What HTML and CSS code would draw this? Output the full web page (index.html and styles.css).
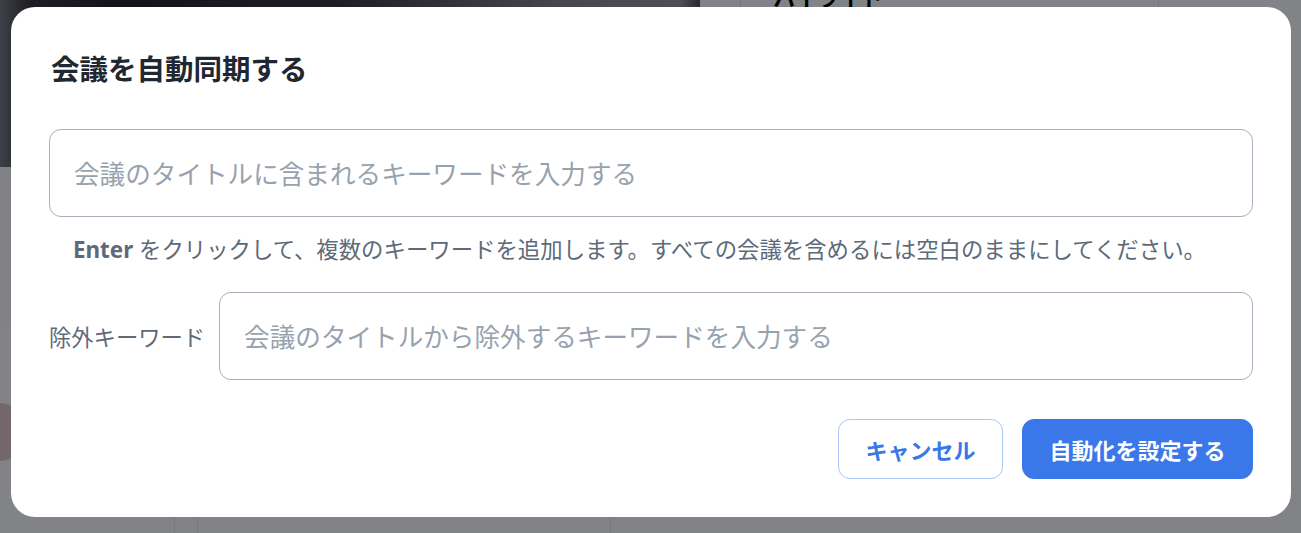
FILE: index.html
```html
<!DOCTYPE html>
<html lang="ja">
<head>
  <meta charset="UTF-8">
  <meta name="viewport" content="width=device-width, initial-scale=1.0">
  <title>会議を自動同期する</title>
  <link rel="stylesheet" href="styles.css">
</head>
<body>

<div class="page">
  <div class="page-top">
    <div class="hero"></div>
    <div class="side">
      <div class="side-gap"></div>
      <div class="side-main">
        <h2 class="side-title">ハイライト</h2>
      </div>
      <div class="side-end"></div>
    </div>
  </div>
  <div class="page-body">
    <div class="rail">
      <div class="rail-line"></div>
      <div class="avatar"></div>
    </div>
  </div>
  <div class="page-foot">
    <div class="foot-col a"></div>
    <div class="foot-col b"></div>
    <div class="foot-col c"></div>
  </div>
</div>

<div class="overlay">
  <div class="modal">
    <h1 class="modal-title">会議を自動同期する</h1>

    <input class="field" type="text" placeholder="会議のタイトルに含まれるキーワードを入力する">
    <p class="hint"><b>Enter</b> をクリックして、複数のキーワードを追加します。すべての会議を含めるには空白のままにしてください。</p>

    <div class="row">
      <label class="row-label">除外キーワード</label>
      <input class="field" type="text" placeholder="会議のタイトルから除外するキーワードを入力する">
    </div>

    <div class="actions">
      <button class="button button-outline">キャンセル</button>
      <button class="button button-primary">自動化を設定する</button>
    </div>
  </div>
</div>

</body>
</html>
```

FILE: styles.css
```css
body {
  margin: 0;
  font-family: "Noto Sans", "Noto Sans CJK JP", sans-serif;
  background: #ffffff;
  overflow: hidden;
}

/* page behind the dialog */
.page {
  height: 533px;
  display: flex;
  flex-direction: column;
}

.page-top {
  display: flex;
  height: 167px;
}

.hero {
  width: 700px;
  background: linear-gradient(90deg, #7a7d84 0px, #3a3a3a 30px, #262626 120px, #3c3c3c 340px, #8a8a8a 560px, #9a9a9a 680px, #505050 700px);
}

.side {
  flex: 1;
  display: flex;
}

.side-gap {
  width: 40px;
  border-right: 1px solid #e6e8eb;
}

.side-main {
  width: 385px;
  border-right: 1px solid #e6e8eb;
  padding-left: 32px;
}

.side-title {
  margin: -20px 0 0;
  font-size: 22px;
  font-weight: 700;
  color: #000;
}

.side-end {
  flex: 1;
}

.page-body {
  flex: 1;
}

.rail {
  width: 11px;
  position: relative;
  height: 100%;
}

.rail-line {
  height: 160px;
  border-bottom: 1px solid #ffffff;
  background: #fdfdfd;
}

.avatar {
  position: absolute;
  left: -30px;
  top: 236px;
  width: 58px;
  height: 58px;
  border-radius: 50%;
  background: #e3c9c9;
}

.page-foot {
  display: flex;
  height: 40px;
}

.foot-col.a {
  width: 174px;
  border-right: 1px solid #ececee;
}

.foot-col.b {
  width: 22px;
  border-right: 1px solid #ececee;
}

.foot-col.c {
  width: 412px;
  border-right: 1px solid #ececee;
}

/* dialog */
.overlay {
  position: fixed;
  inset: 0;
  background: rgba(0, 2, 8, 0.49);
  padding: 7px 10px 16px 11px;
}

.modal {
  background: #ffffff;
  border-radius: 24px;
  padding: 38px;
  display: flex;
  flex-direction: column;
}

.modal-title {
  margin: 0;
  padding-left: 2px;
  font-size: 28.5px;
  line-height: 48px;
  font-weight: 700;
  color: #1f2832;
}

.field {
  box-sizing: border-box;
  width: 100%;
  height: 88px;
  border: 1px solid #a8b0bc;
  border-radius: 12px;
  padding: 2px 24px 0;
  font-family: inherit;
  font-size: 25.6px;
  color: #1f2832;
  outline: none;
}

.modal-title + .field {
  margin-top: 36px;
}

.field::placeholder {
  color: #98a2ae;
}

.hint {
  margin: 18px 0 0;
  padding-left: 24px;
  font-size: 22.4px;
  line-height: 30px;
  color: #5d6a79;
}

.hint b {
  font-weight: 700;
}

.row {
  margin-top: 27px;
  display: flex;
  align-items: center;
  gap: 14px;
}

.row-label {
  flex-shrink: 0;
  font-size: 22.3px;
  color: #5f6a76;
}

.actions {
  margin-top: 39px;
  display: flex;
  justify-content: flex-end;
  gap: 19px;
}

.button {
  height: 60px;
  padding: 0 26.5px;
  border-radius: 12px;
  font-family: inherit;
  font-size: 22px;
  font-weight: 700;
  cursor: pointer;
}

.button-outline {
  background: #ffffff;
  border: 1px solid #a9c5f6;
  color: #3a78e6;
}

.button-primary {
  background: #3a78e9;
  border: 1px solid #3a78e9;
  color: #ffffff;
}
```
